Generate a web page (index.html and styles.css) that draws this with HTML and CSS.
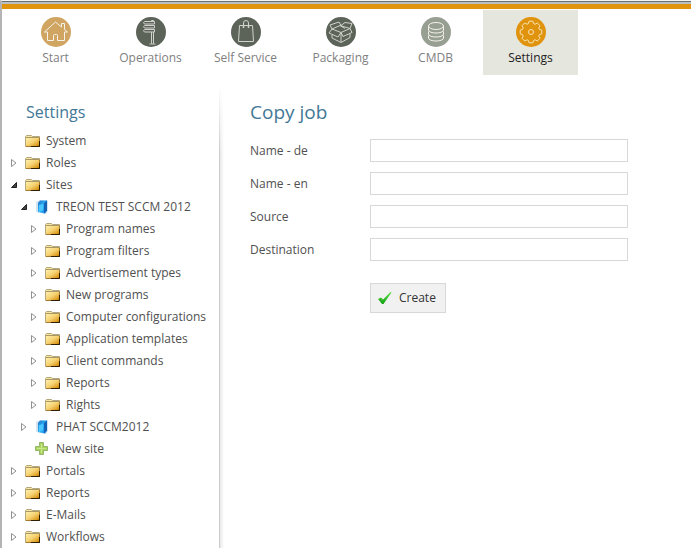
FILE: index.html
```html
<!DOCTYPE html>
<html lang="en">
<head>
<meta charset="utf-8">
<title>Settings</title>
<link rel="stylesheet" href="styles.css">
</head>
<body>
<svg class="defs" aria-hidden="true">
  <defs>
    <linearGradient id="gold" x1="0" y1="0" x2="1" y2="1">
      <stop offset="0" stop-color="#fff0ac"/><stop offset=".45" stop-color="#f6d272"/><stop offset=".8" stop-color="#dc9a1c"/><stop offset="1" stop-color="#7a4c04"/>
    </linearGradient>
    <linearGradient id="blue" x1="0" y1="0" x2="1" y2="1">
      <stop offset="0" stop-color="#1d6fc4"/><stop offset=".5" stop-color="#2cb4fa"/><stop offset="1" stop-color="#1686e0"/>
    </linearGradient>
    <linearGradient id="green" x1="0" y1="0" x2="0" y2="1">
      <stop offset="0" stop-color="#5fe04c"/><stop offset="1" stop-color="#12a012"/>
    </linearGradient>
    <symbol id="folder" viewBox="0 0 16 14">
      <path d="M.5 12.500v-10l1-1h5l1 1h7v10z" fill="#f8e6a0" stroke="#b5a67c"/>
      <path d="M1 4h14v9H1z" fill="url(#gold)"/>
      <path d="M1 3.500h13.500" stroke="#a89868"/>
      <path d="M6 12.500h8.500V7" fill="none" stroke="#2c1e04"/>
      <path d="M1 12.500h5M14.500 4v3" stroke="#a37a2c"/>
    </symbol>
    <symbol id="server" viewBox="0 0 12 14">
      <path d="M0 2l3-1.500 8-.5 1 1v10l-2 3-10-2z" fill="#d3e2ef"/>
      <path d="M2 3l2-2.500h7v10l-2 3-7-1.500z" fill="url(#blue)"/>
      <path d="M8 3l3-2.500v10l-3 3z" fill="#1562b4"/>
      <path d="M3 5l4-1v6l-4 2z" fill="#4cc8ff"/>
    </symbol>
    <symbol id="plus" viewBox="0 0 14 14">
      <path d="M4.500 .5h4v4h4v4h-4v4h-4v-4h-4v-4h4z" fill="#acd45c" stroke="#94b66c"/>
      <path d="M6.500 2v9M2 6.500h9" stroke="#c8e88c"/>
    </symbol>
    <symbol id="closed" viewBox="0 0 6 10"><path d="M.5 1.500v7l4.500-3.500z" fill="#fff" stroke="#909090"/></symbol>
    <symbol id="open" viewBox="0 0 6 6"><path d="M5.500 .5v5h-5z" fill="#444" stroke="#222"/></symbol>
  </defs>
</svg>
<div class="app">
  <header>
    <nav class="tabs" aria-label="Main">
      <a class="tab" href="#"><svg class="disc sand" viewBox="0 0 30 30"><path d="M3.500 15L14.500 5l6 5V6.500h3v6l3 2.500M3.500 15h3v8.500h6v-5q0-1 1-1h2q1 0 1 1v5h7v-8.500h3"/></svg>Start</a>
      <a class="tab" href="#"><svg class="disc dark" viewBox="0 0 30 30"><path d="M15.500 4.500V3.500h2v1M8.500 4.500h10v2.500h-10l-1-1.200zM8.500 8.500h10v2.500h-10l-1-1.200zM8.500 12.500h10v2.500h-10l-1-1.200zM15.500 15v11.500M17.500 15v11.500M13.500 27h6"/></svg>Operations</a>
      <a class="tab" href="#"><svg class="disc dark" viewBox="0 0 30 30"><path d="M8.500 8.500h13l1 16h-15zM12.500 11V6q0-2.500 2.500-2.500T17.500 6v5M11.500 10h2M16.500 10h2"/></svg>Self Service</a>
      <a class="tab" href="#"><svg class="disc dark" viewBox="0 0 30 30"><path d="M6 12l8-3.500 10 3-9 4zM6 12l-2-4 9-3 2 3.500 4-3 7 1-2 5M6 12l-3 4 9 4 3-4.500 2 4 9-4-2-4M6 18v3l9 4.500 9-5v-3.500M15 16v9M14 8.500l5 3"/></svg>Packaging</a>
      <a class="tab" href="#"><svg class="disc pale" viewBox="0 0 30 30"><ellipse cx="15" cy="9" rx="7.500" ry="3.500"/><path d="M7.500 9v4c0 4 15 4 15 0V9M7.500 14.500V17c0 4 15 4 15 0v-2.500M7.500 18.500V21c0 4 15 4 15 0v-2.500"/></svg>CMDB</a>
      <a class="tab current" href="#" aria-current="page"><svg class="disc orange" viewBox="0 0 30 30"><circle cx="15" cy="15" r="2.500"/><path d="M12.400 6.600L13.100 4.200H16.900L17.600 6.600 19.100 7.200 21.300 6 24 8.700 22.800 10.900 23.400 12.400 25.800 13.100V16.900L23.400 17.600 22.800 19.100 24 21.300 21.300 24 19.100 22.800 17.600 23.400 16.900 25.800H13.100L12.400 23.400 10.900 22.800 8.700 24 6 21.300 7.200 19.100 6.600 17.600 4.200 16.900V13.100L6.600 12.400 7.200 10.900 6 8.700 8.700 6 10.900 7.200z"/></svg>Settings</a>
    </nav>
  </header>
  <div class="body">
    <aside>
      <h2>Settings</h2>
      <ul class="tree">
        <li><a class="leaf" href="#"><svg class="folder"><use href="#folder"/></svg>System</a></li>
        <li><a href="#"><svg class="closed"><use href="#closed"/></svg><svg class="folder"><use href="#folder"/></svg>Roles</a></li>
        <li><a href="#"><svg class="open"><use href="#open"/></svg><svg class="folder"><use href="#folder"/></svg>Sites</a>
          <ul>
            <li><a href="#"><svg class="open"><use href="#open"/></svg><svg class="server"><use href="#server"/></svg>TREON TEST SCCM 2012</a>
              <ul>
                <li><a href="#"><svg class="closed"><use href="#closed"/></svg><svg class="folder"><use href="#folder"/></svg>Program names</a></li>
                <li><a href="#"><svg class="closed"><use href="#closed"/></svg><svg class="folder"><use href="#folder"/></svg>Program filters</a></li>
                <li><a href="#"><svg class="closed"><use href="#closed"/></svg><svg class="folder"><use href="#folder"/></svg>Advertisement types</a></li>
                <li><a href="#"><svg class="closed"><use href="#closed"/></svg><svg class="folder"><use href="#folder"/></svg>New programs</a></li>
                <li><a href="#"><svg class="closed"><use href="#closed"/></svg><svg class="folder"><use href="#folder"/></svg>Computer configurations</a></li>
                <li><a href="#"><svg class="closed"><use href="#closed"/></svg><svg class="folder"><use href="#folder"/></svg>Application templates</a></li>
                <li><a href="#"><svg class="closed"><use href="#closed"/></svg><svg class="folder"><use href="#folder"/></svg>Client commands</a></li>
                <li><a href="#"><svg class="closed"><use href="#closed"/></svg><svg class="folder"><use href="#folder"/></svg>Reports</a></li>
                <li><a href="#"><svg class="closed"><use href="#closed"/></svg><svg class="folder"><use href="#folder"/></svg>Rights</a></li>
              </ul>
            </li>
            <li><a href="#"><svg class="closed"><use href="#closed"/></svg><svg class="server"><use href="#server"/></svg>PHAT SCCM2012</a></li>
            <li><a class="leaf" href="#"><svg class="plus"><use href="#plus"/></svg>New site</a></li>
          </ul>
        </li>
        <li><a href="#"><svg class="closed"><use href="#closed"/></svg><svg class="folder"><use href="#folder"/></svg>Portals</a></li>
        <li><a href="#"><svg class="closed"><use href="#closed"/></svg><svg class="folder"><use href="#folder"/></svg>Reports</a></li>
        <li><a href="#"><svg class="closed"><use href="#closed"/></svg><svg class="folder"><use href="#folder"/></svg>E-Mails</a></li>
        <li><a href="#"><svg class="closed"><use href="#closed"/></svg><svg class="folder"><use href="#folder"/></svg>Workflows</a></li>
      </ul>
    </aside>
    <main>
      <h1>Copy job</h1>
      <form>
        <label for="de">Name - de</label><input id="de" type="text">
        <label for="en">Name - en</label><input id="en" type="text">
        <label for="source">Source</label><input id="source" type="text">
        <label for="dest">Destination</label><input id="dest" type="text">
        <button type="button"><svg class="check" viewBox="0 0 16 14"><path d="M1 8l3-1.500 2 2L13.500 1l1 .5L6.500 13H5z" fill="url(#green)"/></svg>Create</button>
      </form>
    </main>
  </div>
</div>
</body>
</html>
```

FILE: styles.css
```css
* { box-sizing: border-box; }
body {
  margin: 0;
  background: #fff;
  color: #505050;
  font: 12px/22px "Open Sans", "Noto Sans", sans-serif;
}
a { color: inherit; text-decoration: none; }
ul { list-style: none; margin: 0; padding: 0; }
h1, h2 { margin: 0; color: #437896; font-weight: 400; }
.defs { position: absolute; width: 0; height: 0; }
.app {
  display: flex;
  flex-direction: column;
  height: 100vh;
  overflow: hidden;
  border-left: 2px solid #b4b4b4;
  border-top: 1px solid #f4f4f4;
}
header {
  flex: none;
  border-top: 1px solid #6c706c;
  box-shadow: inset 0 2px #b8c0c4;
  padding-top: 2px;
}
.tabs {
  display: flex;
  border-top: 5px solid #e0930c;
  padding: 1px 0 0 6px;
}
.tab {
  width: 95px;
  height: 65px;
  padding-top: 7px;
  display: flex;
  flex-direction: column;
  align-items: center;
  color: #808080;
}
.current { background: #e5e6de; color: #222; }
.disc {
  width: 30px;
  height: 30px;
  border-radius: 50%;
  fill: none;
  stroke: #f4f2ea;
}
.sand { background: #d0a562; }
.dark { background: #5c6359; stroke: #d0d2cc; }
.pale { background: #979f93; }
.orange { background: #e0930c; stroke: #f8e2b4; }
.body { display: flex; flex: 1; min-height: 0; }
aside {
  width: 218px;
  flex: none;
  padding-top: 26px;
  border-right: 1px solid;
  border-image: linear-gradient(#fff 10px, #ccc 80px) 1;
}
h2 { font-size: 16px; line-height: 22px; padding-left: 24px; margin-bottom: 7px; }
.tree { padding-left: 7px; }
.tree ul { padding-left: 10px; }
.tree a { display: flex; align-items: center; height: 22px; white-space: nowrap; }
.tree .leaf { padding-left: 16px; }
.closed { width: 6px; height: 10px; margin: 0 8px 0 2px; }
.open { width: 6px; height: 6px; margin: 0 8px 0 2px; }
.folder { width: 16px; height: 14px; margin-right: 5px; }
.server { width: 12px; height: 14px; margin: 0 8px 0 1px; }
.plus { width: 14px; height: 14px; margin-right: 7px; }
main {
  flex: 1;
  min-width: 0;
  padding: 25px 30px 0;
  background:
    linear-gradient(#fff 10px, transparent 80px),
    linear-gradient(to right, #e8e8e8, #fff 4px);
}
h1 { font-size: 19px; line-height: 24px; margin-bottom: 15px; }
form {
  display: grid;
  grid-template-columns: 120px minmax(0, 258px);
  row-gap: 10px;
  align-items: center;
}
input {
  width: 100%;
  height: 23px;
  border: 1px solid #d8d8d8;
  background: #fff;
  font: inherit;
  padding: 0 4px;
}
button {
  grid-column: 2;
  justify-self: start;
  display: flex;
  align-items: center;
  gap: 6px;
  height: 30px;
  margin-top: 12px;
  padding: 0 9px 0 6px;
  border: 1px solid #d8d8d8;
  background: #f1f1f1;
  color: #333;
  font: inherit;
}
.check { width: 16px; height: 14px; }
```
